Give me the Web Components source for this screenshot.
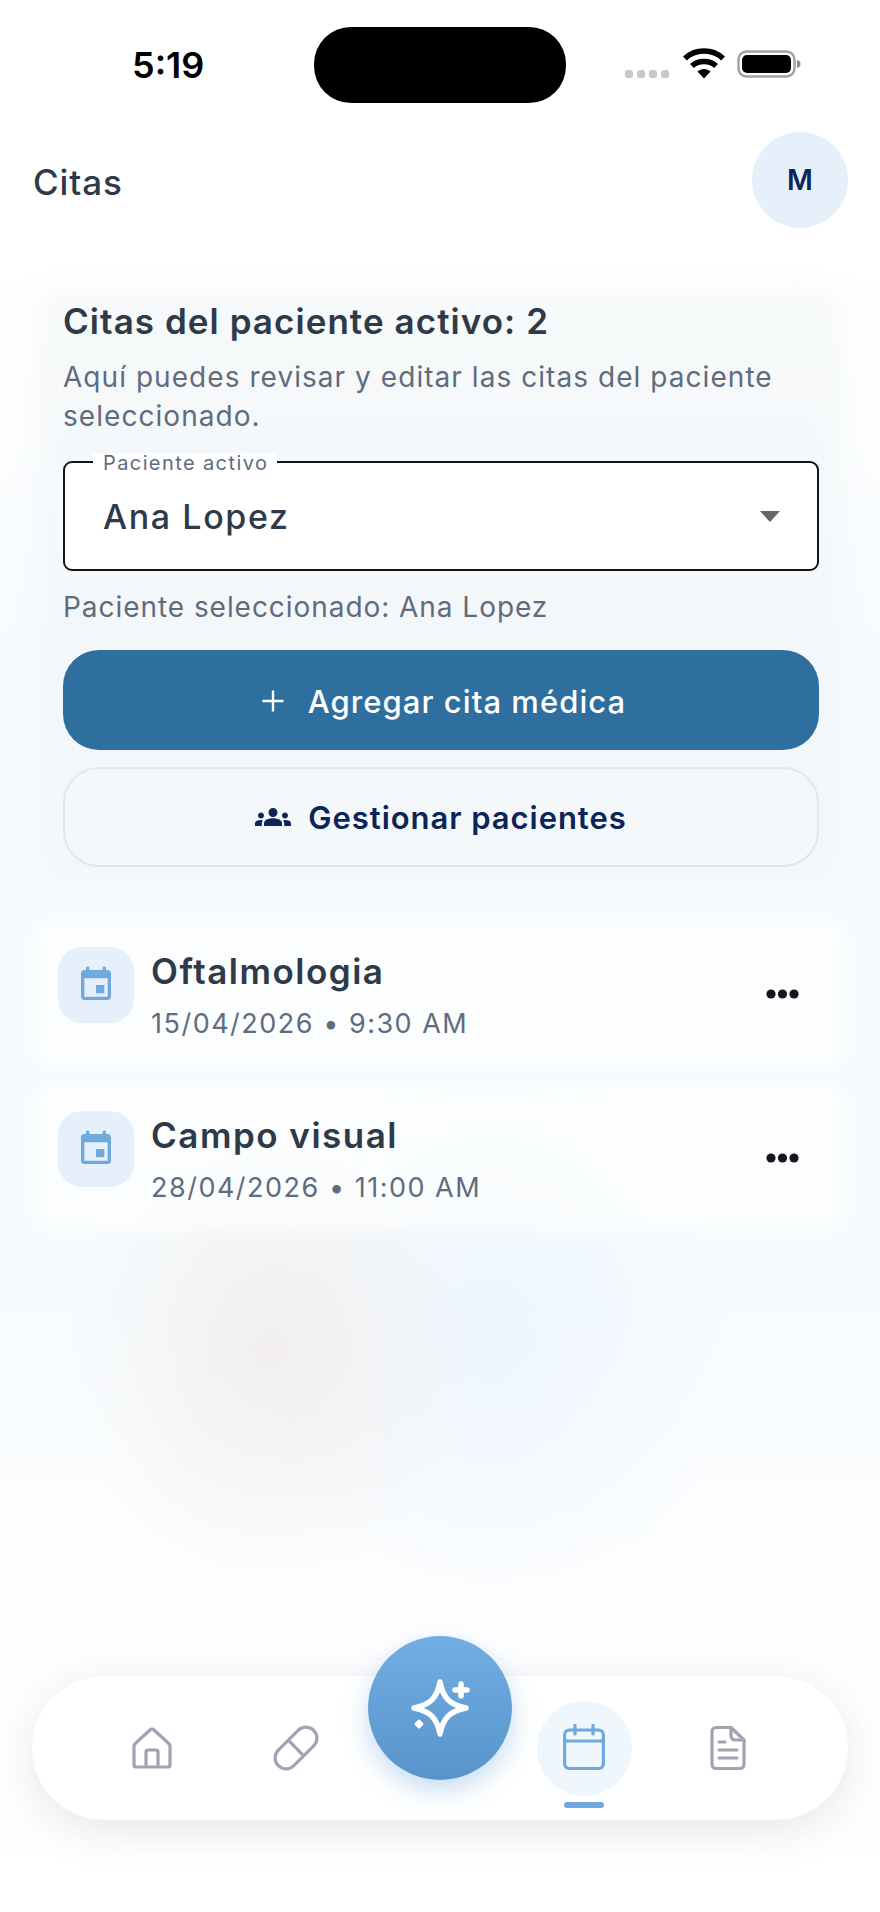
<!DOCTYPE html>
<html lang="es">
<head>
<meta charset="utf-8">
<title>Citas</title>
<style>
  html, body { margin: 0; padding: 0; }
  body { font-family: Inter, "Noto Sans", sans-serif; color: #2f3a48; }
</style>
</head>
<body>
<app-shell>
  <status-bar slot="top" time="5:19"></status-bar>
  <top-bar slot="top" initial="M">Citas</top-bar>
  <patient-card count="2" patient="Ana Lopez"></patient-card>
  <appt-item date="15/04/2026 • 9:30 AM">Oftalmologia</appt-item>
  <appt-item date="28/04/2026 • 11:00 AM">Campo visual</appt-item>
  <bottom-nav slot="bottom"></bottom-nav>
</app-shell>

<script>
class AppShell extends HTMLElement {
  constructor() {
    super();
    this.attachShadow({ mode: 'open' });
    this.shadowRoot.innerHTML = `
      <style>
        :host {
          display: flex;
          flex-direction: column;
          width: 880px;
          height: 1912px;
          overflow: hidden;
          background:
            radial-gradient(ellipse 200px 240px at 270px 1350px, rgba(241,236,234,.8), rgba(244,240,240,0)),
            radial-gradient(ellipse 240px 290px at 490px 1340px, rgba(236,245,253,.85), rgba(240,248,254,0)),
            linear-gradient(180deg, #fff 0, #fff 260px, #f7fbfe 640px, #f6fbfe 1300px, #fefeff 1620px, #fff 1912px);
        }
        main { flex: 1; display: flex; flex-direction: column; gap: 21px; padding: 57px 33px 0 33px; }
        footer { padding: 0 32px 92px 32px; }
      </style>
      <slot name="top"></slot>
      <main><slot></slot></main>
      <footer><slot name="bottom"></slot></footer>
    `;
  }
}

class StatusBar extends HTMLElement {
  constructor() {
    super();
    this.attachShadow({ mode: 'open' });
    const time = this.getAttribute('time') || '';
    this.shadowRoot.innerHTML = `
      <style>
        :host { display: block; height: 132px; box-sizing: border-box; padding-top: 27px; }
        .row { display: grid; grid-template-columns: 314px 252px 1fr; height: 74px; }
        .time { font: 600 36px/76px Inter, "Liberation Sans", sans-serif; color: #000; padding-left: 132px; }
        .island { background: #000; border-radius: 37px; }
        .icons { display: flex; align-items: flex-start; padding: 21px 0 0 59px; }
        svg { display: block; }
      </style>
      <div class="row">
        <div class="time">${time}</div>
        <div class="island"></div>
        <div class="icons">
          <svg width="176" height="34" viewBox="0 0 176 34">
            <g fill="#c9c9c9">
              <rect x="0" y="22" width="8" height="8" rx="2.5"/>
              <rect x="12" y="22" width="8" height="8" rx="2.5"/>
              <rect x="24" y="22" width="8" height="8" rx="2.5"/>
              <rect x="36" y="22" width="8" height="8" rx="2.5"/>
            </g>
            <g fill="none" stroke="#000" stroke-width="5.5">
              <path d="M60 10.5 C70 0.5 88 0.5 98 10.5"/>
              <path d="M67 18 C73 12 85 12 91 18"/>
            </g>
            <path d="M72.5 23.5 C76 20 82 20 85.5 23.5 L79 30.5 Z" fill="#000"/>
            <rect x="113.5" y="3.5" width="56" height="25" rx="8" fill="none" stroke="#a2a2a2" stroke-width="2.5"/>
            <rect x="117" y="7" width="49" height="18" rx="5" fill="#000"/>
            <path d="M172 12 C174.5 12.5 175.5 14 175.5 16 C175.5 18 174.5 19.5 172 20 Z" fill="#8c8c8c"/>
          </svg>
        </div>
      </div>
    `;
  }
}

class TopBar extends HTMLElement {
  constructor() {
    super();
    this.attachShadow({ mode: 'open' });
    const initial = this.getAttribute('initial') || '';
    this.shadowRoot.innerHTML = `
      <style>
        :host { display: flex; align-items: center; justify-content: space-between; height: 96px; padding: 0 32px 0 33px; }
        .title { font-size: 35px; font-weight: 500; letter-spacing: .9px; color: #2f3a48; padding-top: 3px; }
        .avatar { width: 96px; height: 96px; border-radius: 50%; background: #e6f0fb; color: #0b2559;
          display: flex; align-items: center; justify-content: center; font-size: 28px; font-weight: 600; }
      </style>
      <span class="title"><slot></slot></span>
      <span class="avatar">${initial}</span>
    `;
  }
}

class PatientSelect extends HTMLElement {
  constructor() {
    super();
    this.attachShadow({ mode: 'open' });
    const label = this.getAttribute('label') || '';
    this.shadowRoot.innerHTML = `
      <style>
        :host { display: block; position: relative; height: 110px; box-sizing: border-box;
          background: #fff; border: 2.5px solid #14161a; border-radius: 9px; }
        .label { position: absolute; left: 28px; top: -10px; padding: 0 9px 0 10px; background: #fff; line-height: 20px;
          font-size: 20px; letter-spacing: 1.4px; color: #5f6c7d; }
        .row { display: flex; align-items: center; justify-content: space-between; height: 107px; padding: 0 37px 0 38px; }
        .value { font-size: 34px; font-weight: 500; letter-spacing: 1.6px; color: #2f3a48; }
        .arrow { width: 0; height: 0; border: 10px solid transparent; border-top: 11px solid #666; border-bottom: 0; }
      </style>
      <span class="label">${label}</span>
      <div class="row"><span class="value"><slot></slot></span><span class="arrow"></span></div>
    `;
  }
}

class ActionButton extends HTMLElement {
  constructor() {
    super();
    this.attachShadow({ mode: 'open' });
    this.shadowRoot.innerHTML = `
      <style>
        :host { display: flex; align-items: center; justify-content: center; gap: 20px; height: 100px; box-sizing: border-box;
          border-radius: 36px; font-size: 31px; font-weight: 500; letter-spacing: 1.05px; }
        :host([kind="solid"]) { background: #2f6f9f; color: #fff; padding: 2px 0 0 2px; }
        :host([kind="outline"]) { background: rgba(245,249,251,.5); border: 2px solid #e3e7ea; color: #0b2559;
          gap: 17px; letter-spacing: .95px; font-weight: 600; }
        ::slotted(svg) { display: block; }
      </style>
      <slot name="icon"></slot>
      <span><slot></slot></span>
    `;
  }
}

class PatientCard extends HTMLElement {
  constructor() {
    super();
    this.attachShadow({ mode: 'open' });
    const count = this.getAttribute('count');
    const patient = this.getAttribute('patient');
    this.shadowRoot.innerHTML = `
      <style>
        :host { display: block; position: relative; isolation: isolate; padding: 15px 28px 20px 30px; margin-bottom: 13px; }
        :host::before { content: ""; position: absolute; inset: 4px 6px; z-index: -1; border-radius: 24px;
          background: rgba(242,245,247,.6); filter: blur(12px); }
        h2 { margin: 0; font-size: 35px; line-height: 42px; font-weight: 600; letter-spacing: 1.05px; color: #2f3a48; }
        p { margin: 0; color: #5f6c7d; font-size: 28px; line-height: 39px; letter-spacing: 1.05px; }
        .sub { margin-top: 16px; margin-bottom: 25px; }
        .picked { margin-top: 18px; margin-bottom: 25px; line-height: 36px; letter-spacing: .95px; }
        .gap { height: 17px; }
      </style>
      <h2>Citas del paciente activo: ${count}</h2>
      <p class="sub">Aquí puedes revisar y editar las citas del paciente seleccionado.</p>
      <patient-select label="Paciente activo">${patient}</patient-select>
      <p class="picked">Paciente seleccionado: ${patient}</p>
      <action-button kind="solid">
        <svg slot="icon" width="30" height="30" viewBox="0 0 30 30" fill="none" stroke="#fff" stroke-width="2.4"><path d="M15 4.500V25.500M4.500 15H25.500"/></svg>
        Agregar cita médica
      </action-button>
      <div class="gap"></div>
      <action-button kind="outline">
        <svg slot="icon" width="36" height="36" viewBox="0 0 24 24" fill="#0b2559"><path d="M12 12.75c1.63 0 3.07.39 4.24.9 1.08.48 1.76 1.56 1.76 2.73V18H6v-1.61c0-1.18.68-2.26 1.76-2.73 1.17-.52 2.61-.91 4.24-.91zM4 13c1.1 0 2-.9 2-2s-.9-2-2-2-2 .9-2 2 .9 2 2 2zm1.13 1.1C4.76 14.04 4.39 14 4 14c-.99 0-1.93.21-2.78.58C.48 14.9 0 15.62 0 16.43V18h4.5v-1.61c0-.83.23-1.61.63-2.29zM20 13c1.1 0 2-.9 2-2s-.9-2-2-2-2 .9-2 2 .9 2 2 2zm4 3.43c0-.81-.48-1.53-1.22-1.85C21.93 14.21 20.99 14 20 14c-.39 0-.76.04-1.13.1.4.68.63 1.46.63 2.29V18H24v-1.57zM12 6c1.66 0 3 1.34 3 3s-1.34 3-3 3-3-1.34-3-3 1.34-3 3-3z"/></svg>
        Gestionar pacientes
      </action-button>
    `;
  }
}

class ApptItem extends HTMLElement {
  constructor() {
    super();
    this.attachShadow({ mode: 'open' });
    const date = this.getAttribute('date') || '';
    this.shadowRoot.innerHTML = `
      <style>
        :host { display: flex; align-items: flex-start; position: relative; isolation: isolate; height: 143px; box-sizing: border-box;
          padding: 26px 48px 0 25px; }
        :host::before { content: ""; position: absolute; inset: -1px -1px -4px -1px; z-index: -1; border-radius: 24px;
          background: rgba(255,255,255,.6); filter: blur(7px); }
        .tile { width: 76px; height: 76px; border-radius: 24px; background: #e6f0fa; flex: none;
          display: flex; align-items: center; justify-content: center; }
        .text { flex: 1; margin-left: 17px; padding-top: 4px; }
        .name { font-size: 35px; line-height: 40px; font-weight: 600; letter-spacing: 1.5px; color: #2f3a48; }
        .date { margin-top: 15px; font-size: 27px; line-height: 36px; letter-spacing: 1.5px; color: #5f6c7d; }
        .more { display: block; margin-top: 39px; }
        svg { display: block; }
      </style>
      <div class="tile">
        <svg width="40" height="40" viewBox="0 0 24 24" fill="#70a9dc"><path d="M17 12h-5v5h5v-5zM16 1v2H8V1H6v2H5c-1.11 0-1.99.9-1.99 2L3 19c0 1.1.89 2 2 2h14c1.1 0 2-.9 2-2V5c0-1.1-.9-2-2-2h-1V1h-2zm3 18H5V8h14v11z"/></svg>
      </div>
      <div class="text">
        <div class="name"><slot></slot></div>
        <div class="date">${date}</div>
      </div>
      <svg class="more" width="33" height="16" viewBox="0 0 33 16" fill="#14161a">
        <circle cx="5" cy="8" r="4.600"/><circle cx="16.500" cy="8" r="4.600"/><circle cx="28" cy="8" r="4.600"/>
      </svg>
    `;
  }
}

class NavSlot extends HTMLElement {
  constructor() {
    super();
    this.attachShadow({ mode: 'open' });
    this.shadowRoot.innerHTML = `
      <style>
        :host { display: flex; align-items: center; justify-content: center; position: relative; height: 144px; }
        .icon { width: 95px; height: 95px; border-radius: 50%; display: flex; align-items: center; justify-content: center; }
        :host([active]) .icon { background: #eff6fc; }
        :host([active])::after { content: ""; position: absolute; left: 52px; bottom: 12px; width: 40px; height: 6px;
          border-radius: 3px; background: #6fa9dd; }
        ::slotted(svg) { display: block; }
      </style>
      <div class="icon"><slot></slot></div>
    `;
  }
}

class BottomNav extends HTMLElement {
  constructor() {
    super();
    this.attachShadow({ mode: 'open' });
    this.shadowRoot.innerHTML = `
      <style>
        :host { display: grid; grid-template-columns: repeat(5, 144px); padding: 0 48px; position: relative;
          background: #fff; border-radius: 72px; box-shadow: 0 10px 44px rgba(60,70,90,.13); }
        .fab { position: absolute; left: 336px; top: -40px; width: 144px; height: 144px; border-radius: 50%;
          background: linear-gradient(180deg, #72aee3, #5794c9); box-shadow: 0 10px 26px rgba(90,155,215,.35);
          display: flex; align-items: center; justify-content: center; }
        svg { display: block; }
      </style>
      <nav-slot>
        <svg width="48" height="48" viewBox="0 0 48 48" fill="none" stroke="#a2a2b5" stroke-width="3.2" stroke-linejoin="round">
          <path d="M6 22a3 3 0 0 1 1-2.2L22 6a3 3 0 0 1 4 0L41 19.800a3 3 0 0 1 1 2.200V41a2 2 0 0 1-2 2H8a2 2 0 0 1-2-2Z"/>
          <path d="M18 43V28a2 2 0 0 1 2-2h8a2 2 0 0 1 2 2V43"/>
        </svg>
      </nav-slot>
      <nav-slot>
        <svg width="48" height="48" viewBox="0 0 48 48" fill="none" stroke="#a2a2b5" stroke-width="3.2">
          <g transform="rotate(-45 24 24)">
            <rect x="-1" y="13" width="50" height="22" rx="11"/>
            <path d="M24 13V35"/>
          </g>
        </svg>
      </nav-slot>
      <nav-slot></nav-slot>
      <nav-slot active>
        <svg width="48" height="48" viewBox="0 0 48 48" fill="none" stroke="#6fa9dd" stroke-width="3.2" stroke-linecap="round">
          <rect x="4.600" y="6" width="38.800" height="38.500" rx="5"/>
          <path d="M4.600 17H43.400M15 1.500V10M33 1.500V10"/>
        </svg>
      </nav-slot>
      <nav-slot>
        <svg width="48" height="48" viewBox="0 0 48 48" fill="none" stroke="#a2a2b5" stroke-width="3.2" stroke-linejoin="round" stroke-linecap="round">
          <path d="M12 3.500H27L40 16V40.500a4 4 0 0 1-4 4H12a4 4 0 0 1-4-4V7.500a4 4 0 0 1 4-4Z"/>
          <path d="M27 3.500V12a4 4 0 0 0 4 4H40M15 18H21M15 26H33M15 34H33"/>
        </svg>
      </nav-slot>
      <div class="fab">
        <svg width="80" height="80" viewBox="0 0 80 80" fill="none" stroke="#fff" stroke-width="5.500" stroke-linejoin="round" stroke-linecap="round">
          <path d="M40 14C43 30 50 37 66 40C50 43 43 50 40 66C37 50 30 43 14 40C30 37 37 30 40 14Z"/>
          <path d="M61 16V28M55 22H67"/>
          <path d="M19 53L22 56L19 59L16 56Z" fill="#fff" stroke-width="3"/>
        </svg>
      </div>
    `;
  }
}

customElements.define('app-shell', AppShell);
customElements.define('status-bar', StatusBar);
customElements.define('top-bar', TopBar);
customElements.define('patient-select', PatientSelect);
customElements.define('action-button', ActionButton);
customElements.define('patient-card', PatientCard);
customElements.define('appt-item', ApptItem);
customElements.define('nav-slot', NavSlot);
customElements.define('bottom-nav', BottomNav);
</script>
</body>
</html>
